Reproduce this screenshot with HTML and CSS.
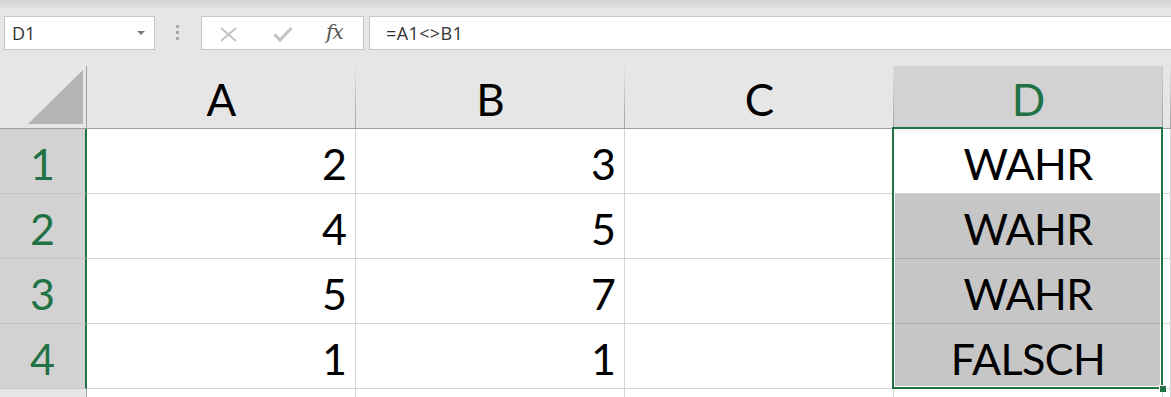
FILE: index.html
```html
<!DOCTYPE html>
<html lang="de">
<head>
<meta charset="utf-8">
<title>Excel</title>
<link rel="stylesheet" href="styles.css">
</head>
<body>
<div class="toolbar">
  <div class="namebox"><span class="ref">D1</span><span class="caret"></span></div>
  <div class="grip"><i></i><i></i><i></i></div>
  <div class="fnbox">
    <svg class="ic-x" width="17" height="15" viewBox="0 0 17 15"><path d="M1 1 L16 14 M16 1 L1 14" stroke="#c2c2c2" stroke-width="1.8" fill="none"/></svg>
    <svg class="ic-ok" width="20" height="17" viewBox="0 0 20 17"><path d="M1.5 8.5 L7 14 L18.5 2" stroke="#c2c2c2" stroke-width="3" fill="none"/></svg>
    <span class="fx">fx</span>
  </div>
  <div class="formula">=A1&lt;&gt;B1</div>
</div>
<div class="sheet">
  <div class="corner"><svg width="87" height="62" viewBox="0 0 87 62"><polygon points="83,4 83,58 28,58" fill="#b4b4b4"/></svg></div>
  <div class="ch">A</div>
  <div class="ch">B</div>
  <div class="ch">C</div>
  <div class="ch sel">D</div>
  <div class="ch"></div>

  <div class="rh sel">1</div>
  <div class="c num">2</div>
  <div class="c num">3</div>
  <div class="c"></div>
  <div class="c mid">WAHR</div>
  <div class="c"></div>

  <div class="rh sel">2</div>
  <div class="c num">4</div>
  <div class="c num">5</div>
  <div class="c"></div>
  <div class="c mid hl">WAHR</div>
  <div class="c"></div>

  <div class="rh sel">3</div>
  <div class="c num">5</div>
  <div class="c num">7</div>
  <div class="c"></div>
  <div class="c mid hl">WAHR</div>
  <div class="c"></div>

  <div class="rh sel">4</div>
  <div class="c num">1</div>
  <div class="c num">1</div>
  <div class="c"></div>
  <div class="c mid hl">FALSCH</div>
  <div class="c"></div>

  <div class="rh"></div>
  <div class="c"></div>
  <div class="c"></div>
  <div class="c"></div>
  <div class="c"></div>
  <div class="c"></div>

  <div class="selection"><span class="handle"></span></div>
</div>
</body>
</html>
```

FILE: styles.css
```css
* { box-sizing: border-box; }
html, body { margin: 0; padding: 0; }
body {
  background: #e6e6e6;
  width: 1171px;
  height: 397px;
  overflow: hidden;
  font-family: "Open Sans", "Noto Sans", sans-serif;
}
.toolbar {
  height: 66px;
  display: flex;
  align-items: flex-start;
  padding-top: 16px;
  background: linear-gradient(#d3d3d3, #e6e6e6 10px);
}
.namebox {
  margin-left: 4px;
  width: 151px;
  height: 34px;
  background: #fff;
  border: 1px solid #c6c6c6;
  display: flex;
  align-items: center;
  padding-left: 7px;
  padding-right: 9px;
  font-size: 18px;
  color: #333;
}
.caret {
  margin-left: auto;
  width: 0;
  height: 0;
  border-left: 4px solid transparent;
  border-right: 4px solid transparent;
  border-top: 4px solid #7a7a7a;
}
.grip {
  margin-left: 21px;
  width: 3px;
  padding-top: 9px;
  display: flex;
  flex-direction: column;
  gap: 3px;
}
.grip i {
  display: block;
  width: 3px;
  height: 3px;
  background: #a8a8a8;
}
.fnbox {
  margin-left: 22px;
  width: 163px;
  height: 34px;
  background: #fff;
  border: 1px solid #c6c6c6;
  display: flex;
  align-items: center;
}
.ic-x { margin-left: 18px; margin-top: 2px; }
.ic-ok { margin-left: 36px; margin-top: 2px; }
.fx {
  margin-left: 33px;
  font-family: "DejaVu Serif", "Liberation Serif", serif;
  font-style: italic;
  font-size: 20px;
  color: #555;
  margin-top: -3px;
  letter-spacing: -1px;
}
.formula {
  margin-left: 5px;
  flex: 1;
  margin-right: -2px;
  height: 34px;
  background: #fff;
  border: 1px solid #c6c6c6;
  display: flex;
  align-items: center;
  padding-left: 16px;
  font-size: 18px;
  color: #333;
  letter-spacing: 0.4px;
}
.sheet {
  position: relative;
  display: grid;
  grid-template-columns: 87px 269px 269px 269px 269px 1fr;
  grid-template-rows: 63px repeat(5, 65px);
  font-family: "Lato", "Open Sans", sans-serif;
}
.corner {
  background: #e6e6e6;
  border-right: 1px solid #a0a0a0;
  border-bottom: 1px solid #a0a0a0;
  line-height: 0;
}
.corner svg { display: block; }
.ch {
  background: linear-gradient(#e2e2e2, #a2a2a2) right / 1px 100% no-repeat, #e6e6e6;
  border-bottom: 1px solid #a0a0a0;
  display: flex;
  align-items: center;
  justify-content: center;
  font-size: 44px;
  line-height: 1;
  padding-top: 4px;
  color: #000;
}
.ch.sel {
  background: linear-gradient(#cfcfcf, #a2a2a2) right / 1px 100% no-repeat, #d2d2d2;
  color: #217346;
}
.rh {
  background: #e6e6e6;
  border-right: 1px solid #a0a0a0;
  border-bottom: 1px solid #c4c4c4;
  display: flex;
  align-items: center;
  justify-content: center;
  font-size: 43px;
  line-height: 1;
  padding-top: 4px;
  color: #000;
}
.rh.sel {
  background: #d2d2d2;
  color: #217346;
  border-right: 2px solid #217346;
}
.c {
  background: #fff;
  border-right: 1px solid #d4d4d4;
  border-bottom: 1px solid #d4d4d4;
  display: flex;
  align-items: center;
  font-size: 43px;
  line-height: 1;
  padding-top: 4px;
  color: #000;
}
.num { justify-content: flex-end; padding-right: 8px; }
.mid { justify-content: center; letter-spacing: -0.6px; }
.hl { background: #c6c6c6; border-bottom-color: #a8a8a8; border-right-color: #a8a8a8; }
.selection {
  position: absolute;
  left: 892px;
  top: 61px;
  width: 271px;
  height: 262px;
  border: 2px solid #217346;
  box-shadow: inset 0 0 0 1px #fff;
  pointer-events: none;
}
.handle {
  position: absolute;
  right: -6px;
  bottom: -6px;
  width: 8px;
  height: 8px;
  background: #217346;
  border: 1px solid #fff;
}
```
